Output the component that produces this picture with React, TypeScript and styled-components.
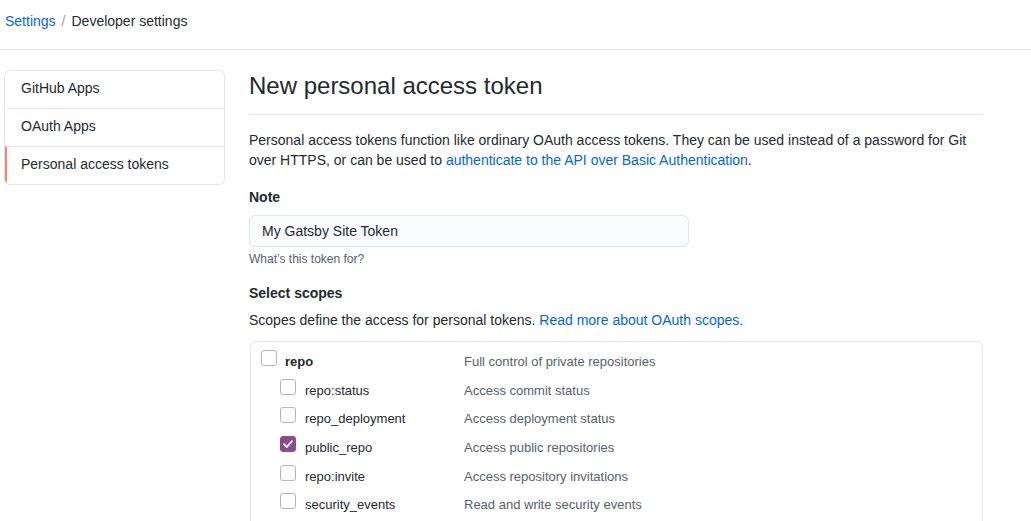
import React from "react";
import styled, { createGlobalStyle } from "styled-components";

const Global = createGlobalStyle`
  html, body { margin: 0; padding: 0; background: #fff; }
  body { font-family: "Liberation Sans", Arial, sans-serif; color: #24292e; font-size: 14px; }
  * { box-sizing: border-box; }
`;

const Header = styled.header`
  height: 50px;
  border-bottom: 1px solid #e1e4e8;
  display: flex;
  align-items: center;
  padding: 0 5px 8px;
  font-size: 14px;
  line-height: 20px;
`;

const Crumb = styled.a`
  color: #0366d6;
  text-decoration: none;
`;

const Sep = styled.span`
  color: #959da5;
  margin: 0 6px;
`;

const Layout = styled.div`
  display: grid;
  grid-template-columns: 221px 734px;
  column-gap: 24px;
  padding: 20px 0 0 4px;
`;

const SideNav = styled.nav`
  border: 1px solid #e1e4e8;
  border-radius: 6px;
  align-self: start;
  overflow: hidden;
`;

const NavItem = styled.div<{ $active?: boolean }>`
  box-sizing: content-box;
  height: 34px;
  padding: 0 0 3px 14px;
  display: flex;
  align-items: center;
  font-size: 14px;
  color: #24292e;
  border-left: 2px solid ${(p) => (p.$active ? "#f9826c" : "transparent")};
  & + & { border-top: 1px solid #e1e4e8; }
`;

const Main = styled.main``;

const Title = styled.h1`
  margin: 0;
  font-size: 24px;
  font-weight: 400;
  line-height: 30px;
  padding: 1px 0 13px;
  border-bottom: 1px solid #e1e4e8;
`;

const Lead = styled.p`
  margin: 15px 0 0;
  line-height: 20px;
  font-size: 14px;
`;

const Link = styled.a`
  color: #0366d6;
  text-decoration: none;
`;

const Label = styled.div`
  font-weight: 700;
  font-size: 14px;
  line-height: 20px;
  margin-top: 17px;
`;

const Input = styled.div`
  margin-top: 8px;
  width: 440px;
  height: 32px;
  border: 1px solid #e1e4e8;
  border-radius: 6px;
  background: #fafbfc;
  display: flex;
  align-items: center;
  padding-left: 12px;
  font-size: 14px;
`;

const Hint = styled.div`
  font-size: 12px;
  color: #586069;
  margin-top: 4px;
  line-height: 16px;
`;

const SectionLabel = styled(Label)`
  margin-top: 16px;
`;

const Note = styled.p`
  margin: 7px 0 0;
  font-size: 14px;
  line-height: 20px;
`;

const ScopeBox = styled.div`
  margin-top: 11px;
  margin-left: 1px;
  border: 1px solid #e1e4e8;
  border-radius: 6px;
  padding: 5px 10px 0;
  height: 200px;
`;

const ScopeRow = styled.div<{ $child?: boolean }>`
  display: grid;
  grid-template-columns: ${(p) => (p.$child ? "19px 25px 159px" : "24px 179px")} 1fr;
  align-items: center;
  height: ${(p) => (p.$child ? "28.6px" : "29px")};
  font-size: 13px;
`;

const Box = styled.span<{ $checked?: boolean }>`
  width: 16px;
  height: 16px;
  border-radius: 3px;
  border: 1px solid ${(p) => (p.$checked ? "#8c4a89" : "#b1b5ba")};
  background: ${(p) => (p.$checked ? "#8c4a89" : "#fff")};
  display: inline-flex;
  align-items: center;
  justify-content: center;
  margin-top: -7px;
`;

const Name = styled.span<{ $bold?: boolean }>`
  font-weight: ${(p) => (p.$bold ? 700 : 400)};
  color: #24292e;
`;

const Desc = styled.span`
  color: #586069;
`;

const Check = () => (
  <svg width="12" height="12" viewBox="0 0 12 12">
    <path d="M2 6.2 L4.8 9 L10 3.2" fill="none" stroke="#fff" strokeWidth="1.8" strokeLinecap="round" strokeLinejoin="round" />
  </svg>
);

const children = [
  { name: "repo:status", desc: "Access commit status" },
  { name: "repo_deployment", desc: "Access deployment status" },
  { name: "public_repo", desc: "Access public repositories", checked: true },
  { name: "repo:invite", desc: "Access repository invitations" },
  { name: "security_events", desc: "Read and write security events" },
];

export default function App() {
  return (
    <>
      <Global />
      <Header>
        <Crumb href="#">Settings</Crumb>
        <Sep>/</Sep>
        <span>Developer settings</span>
      </Header>
      <Layout>
        <SideNav>
          <NavItem>GitHub Apps</NavItem>
          <NavItem>OAuth Apps</NavItem>
          <NavItem $active>Personal access tokens</NavItem>
        </SideNav>
        <Main>
          <Title>New personal access token</Title>
          <Lead>
            Personal access tokens function like ordinary OAuth access tokens. They can be used instead of a password for Git
            over HTTPS, or can be used to <Link href="#">authenticate to the API over Basic Authentication</Link>.
          </Lead>
          <Label>Note</Label>
          <Input>My Gatsby Site Token</Input>
          <Hint>What’s this token for?</Hint>
          <SectionLabel>Select scopes</SectionLabel>
          <Note>
            Scopes define the access for personal tokens. <Link href="#">Read more about OAuth scopes.</Link>
          </Note>
          <ScopeBox>
            <ScopeRow>
              <Box />
              <Name $bold>repo</Name>
              <Desc>Full control of private repositories</Desc>
            </ScopeRow>
            {children.map((c) => (
              <ScopeRow $child key={c.name}>
                <span />
                <Box $checked={c.checked}>{c.checked && <Check />}</Box>
                <Name>{c.name}</Name>
                <Desc>{c.desc}</Desc>
              </ScopeRow>
            ))}
          </ScopeBox>
        </Main>
      </Layout>
    </>
  );
}
